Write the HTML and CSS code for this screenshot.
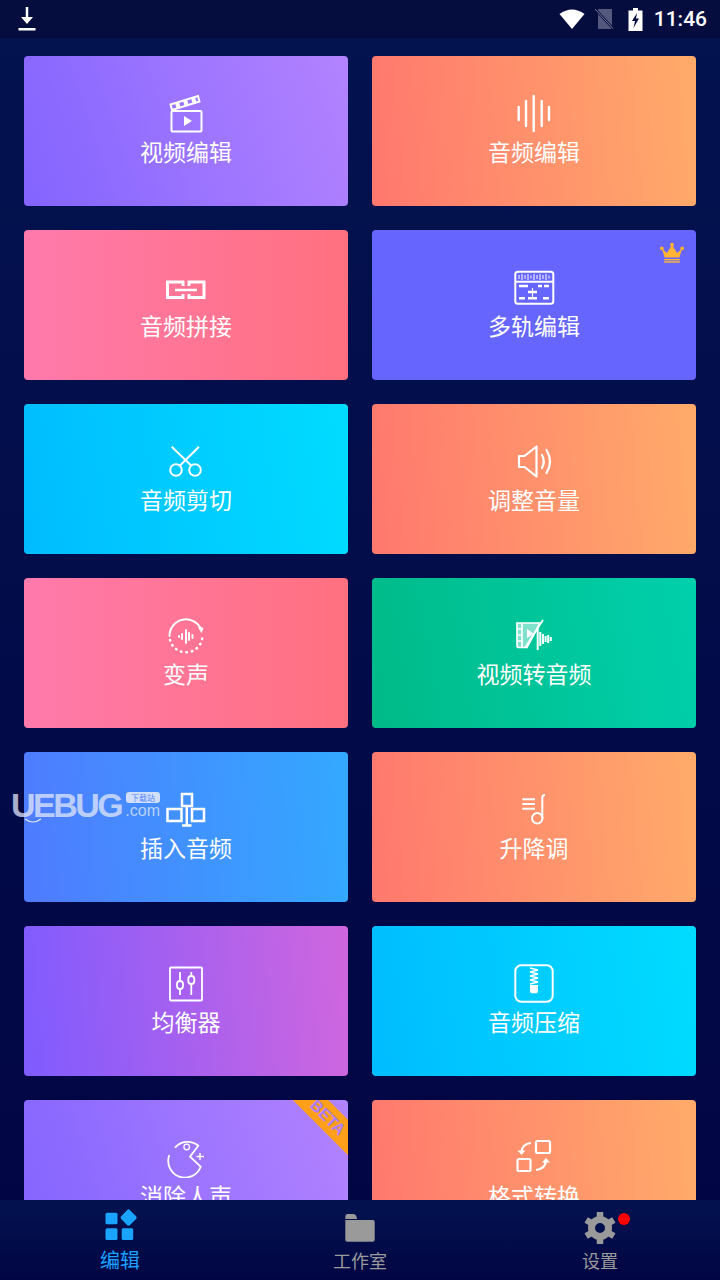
FILE: index.html
```html
<!DOCTYPE html>
<html lang="zh-CN">
<head>
  <meta charset="utf-8" />
  <title>音频编辑</title>
  <meta name="viewport" content="width=device-width, initial-scale=1">
  <link rel="stylesheet" href="styles.css">
</head>
<body>

<div class="phone">

  <!-- status bar -->
  <div class="status">
    <svg class="st-download" width="20" height="26" viewBox="0 0 20 26">
      <path d="M10 1 V12" stroke="#fff" stroke-width="2.500" fill="none"/>
      <path d="M4 11 H16 L10 18 Z" fill="#fff"/>
      <rect x="1.500" y="22" width="17" height="2.500" fill="#fff"/>
    </svg>
    <div class="status-right">
      <svg width="26" height="20" viewBox="0 0 26 20">
        <path d="M0.500 5 Q13 -4 25.500 5 L13 20 Z" fill="#fff"/>
      </svg>
      <svg class="st-sim" width="20" height="20" viewBox="0 0 20 20">
        <path d="M3 0 H17 V20 H3 Z" fill="#54587c"/>
        <path d="M0.500 0.500 L18.500 20" stroke="#050d3f" stroke-width="2.500"/>
        <path d="M0 0 L18 19.500" stroke="#7a7e9c" stroke-width="1"/>
      </svg>
      <svg width="15" height="23" viewBox="0 0 15 23">
        <path d="M5 0 H10 V2.500 H14.500 V23 H0.500 V2.500 H5 Z" fill="#fff"/>
        <path d="M9 5 L4 13 H7 L5.500 20 L11 10.500 H8 Z" fill="#050d3f"/>
      </svg>
      <span class="time">11:46</span>
    </div>
  </div>

  <!-- tool grid -->
  <div class="main">
    <div class="grid">

      <div class="card purple">
        <svg class="ico" viewBox="0 0 44 44" fill="none" stroke="#fff" stroke-width="2">
          <rect x="7.500" y="21" width="30" height="20.500" rx="1"/>
          <path d="M6.500 14.500 L34 6 L35.500 11.500 L8 20 Z"/>
          <path d="M11 13 L15 12 L16.500 17 L12.500 18 Z M19 10.500 L23 9.500 L24.500 14.500 L20.500 15.500 Z M27 8.500 L31 7.500 L32.500 12 L28.500 13 Z" fill="#fff" stroke="none"/>
          <path d="M20 26 L28 31 L20 36 Z" fill="#fff" stroke="none"/>
        </svg>
        <div class="label">视频编辑</div>
      </div>

      <div class="card orange">
        <svg class="ico" viewBox="0 0 44 44" fill="none" stroke="#fff" stroke-width="2.400" stroke-linecap="round">
          <path d="M6.700 17 V30 M14 11 V36 M21.700 6 V41 M29.700 11 V36 M37 17 V30"/>
        </svg>
        <div class="label">音频编辑</div>
      </div>

      <div class="card pink">
        <svg class="ico" viewBox="0 0 44 44" fill="none" stroke="#fff" stroke-width="3">
          <path d="M19 22 V18 H3.500 V33.500 H19 V30 M25 22 V18 H40 V33.500 H25 V30"/>
          <path d="M11 26 H33" stroke-width="2.500"/>
        </svg>
        <div class="label">音频拼接</div>
      </div>

      <div class="card violet">
        <svg class="crown" width="24" height="22" viewBox="0 0 26 22" fill="#ffb433">
          <circle cx="2" cy="6" r="2"/>
          <circle cx="13" cy="2" r="2"/>
          <circle cx="24" cy="6" r="2"/>
          <path d="M2 6 L7.500 11 L13 2 L18.500 11 L24 6 L21 16 H5 Z"/>
          <rect x="4.500" y="17.500" width="17" height="1.500"/>
          <rect x="4.500" y="20" width="17" height="1.500"/>
        </svg>
        <svg class="ico" viewBox="0 0 44 44" fill="none" stroke="#fff" stroke-width="2">
          <rect x="3.300" y="7.700" width="38" height="32" rx="2.500"/>
          <path d="M3.300 17.700 H41.300"/>
          <path d="M7 11 V15 M10 10 V16 M13 11 V15 M16 10 V16 M19 11.500 V14.500 M22 10 V16 M25 11 V15 M28 10 V16 M31 11 V15 M34 10 V16 M37 11.500 V14.500" stroke-width="1"/>
          <path d="M7 22 H16 M26 22 H30 M32 22 H37 M16 28 H25 M7 34.300 H13 M16 34.300 H25 M31 34.300 H37" stroke-width="2.500"/>
          <path d="M20.500 24 V33" stroke-width="1.200"/>
        </svg>
        <div class="label">多轨编辑</div>
      </div>

      <div class="card cyan">
        <svg class="ico" viewBox="0 0 44 44" fill="none" stroke="#fff" stroke-width="2">
          <circle cx="12" cy="32" r="5.800"/>
          <circle cx="31" cy="32" r="5.800"/>
          <path d="M7.700 8.700 L27.700 28 M35 8.700 L15.500 28"/>
        </svg>
        <div class="label">音频剪切</div>
      </div>

      <div class="card orange">
        <svg class="ico" viewBox="0 0 44 44" fill="none" stroke="#fff" stroke-width="2.200" stroke-linejoin="round" stroke-linecap="round">
          <path d="M7 18 H12.500 L24.500 8.500 V38.500 L12.500 29 H7 Z"/>
          <path d="M30 17 Q33.500 23.500 30 30 M34.500 12 Q41.500 23.500 34.500 35"/>
        </svg>
        <div class="label">调整音量</div>
      </div>

      <div class="card pink">
        <svg class="ico" viewBox="0 0 44 44" fill="none" stroke="#fff" stroke-width="2" stroke-linecap="round">
          <path d="M5.500 24 A16.500 16.500 0 0 1 37 17"/>
          <path d="M35 15.500 L39 16 L37.500 20 Z" fill="#fff" stroke-width="1"/>
          <path d="M6 28 A16.500 16.500 0 0 0 38.300 26" stroke-width="2.600" stroke-dasharray="0.500 5"/>
          <path d="M15 24 V25 M18 22 V27 M22 18 V31 M25 21 V28 M28.500 23 V26" stroke-width="2"/>
        </svg>
        <div class="label">变声</div>
      </div>

      <div class="card green">
        <svg class="ico" viewBox="0 0 44 44" fill="none" stroke="#fff" stroke-width="1.700">
          <path d="M5 11 H28 L15 35.500 H7 Q5 35.500 5 33.500 Z" fill="rgba(255,255,255,0.5)"/>
          <path d="M10 11 V35.500 M5 17 H10 M5 23 H10 M5 29 H10"/>
          <path d="M15 17 L22 22 L15 26 Z" fill="#fff" stroke="none"/>
          <path d="M31 8 L13 35.700"/>
          <path d="M25.700 16 V38 M28.300 20 V34 M31 22 V32 M33.600 24 V30 M36.200 23 V31 M38.800 25 V29" stroke-width="2"/>
        </svg>
        <div class="label">视频转音频</div>
      </div>

      <div class="card blue">
        <svg class="ico" viewBox="0 0 44 44" fill="none" stroke="#fff" stroke-width="2.500">
          <rect x="18" y="8" width="10" height="12"/>
          <rect x="3.500" y="23" width="14" height="12"/>
          <rect x="28" y="23" width="12" height="12"/>
          <path d="M22.800 20 V39 M18 39.500 H27.500"/>
        </svg>
        <div class="label">插入音频</div>
      </div>

      <div class="card orange">
        <svg class="ico" viewBox="0 0 44 44" fill="none" stroke="#fff" stroke-width="2">
          <path d="M10.300 13.300 H23 M10.300 18 H23 M10.300 22.700 H23"/>
          <path d="M33 9 Q30.300 9 30.300 11.500 V32.500"/>
          <circle cx="25.300" cy="32.300" r="5.200"/>
        </svg>
        <div class="label">升降调</div>
      </div>

      <div class="card magenta">
        <svg class="ico" viewBox="0 0 44 44" fill="none" stroke="#fff" stroke-width="1.800">
          <rect x="6" y="7.500" width="32" height="33" rx="1"/>
          <path d="M16 12 V21 M16 29 V35 M27.300 12 V16 M27.300 24 V35"/>
          <rect x="13" y="21" width="6" height="8" rx="3"/>
          <rect x="24.300" y="16" width="6" height="8" rx="3"/>
        </svg>
        <div class="label">均衡器</div>
      </div>

      <div class="card cyan">
        <svg class="ico" viewBox="0 0 44 44" fill="none" stroke="#fff" stroke-width="2">
          <rect x="3.300" y="5.300" width="37.400" height="36.400" rx="6"/>
          <path d="M18 8 L26 10 L18 12 L26 14 L18 16 L26 18 L18 20 L26 22 L18 24" stroke-width="1.500"/>
          <path d="M18 25 H26 V31 Q26 33.300 24 33.300 H20 Q18 33.300 18 31 Z" fill="#fff" stroke="none"/>
        </svg>
        <div class="label">音频压缩</div>
      </div>

      <div class="card purple">
        <div class="ribbon">BETA</div>
        <svg class="ico" viewBox="0 0 44 44" fill="none" stroke="#fff" stroke-width="1.800">
          <path d="M11 13.700 A16.500 16.500 0 0 1 34.300 11.700 L26 22.700 L36.700 32.700 A16.500 16.500 0 0 1 5.300 21"/>
          <circle cx="22.700" cy="13" r="2.800" stroke-width="1.300"/>
          <path d="M32.500 22.500 H40 M36 19 V26" stroke-width="1.400"/>
        </svg>
        <div class="label">消除人声</div>
      </div>

      <div class="card orange">
        <svg class="ico" viewBox="0 0 44 44" fill="none" stroke="#fff" stroke-width="2.200">
          <rect x="24" y="7" width="14" height="12" rx="1.500"/>
          <rect x="5.500" y="25" width="13" height="12" rx="1.500"/>
          <path d="M19 9 Q10 10 9.500 18"/>
          <path d="M5.500 16.500 H13.500 L9.500 21 Z" fill="#fff" stroke="none"/>
          <path d="M24 36 Q33 35 34 27"/>
          <path d="M30 28.500 H38 L34 24 Z" fill="#fff" stroke="none"/>
        </svg>
        <div class="label">格式转换</div>
      </div>

    </div>

    <!-- site watermark over the grid -->
    <div class="watermark">
      <span class="wm-name">UEBUG</span>
      <svg class="wm-smile" width="18" height="6" viewBox="0 0 18 6" fill="none" stroke="#e1e8fa" stroke-width="1.200">
        <path d="M1 1 Q9 7 17 1"/>
      </svg>
      <div class="wm-side">
        <span class="wm-tag">下载站</span>
        <span class="wm-com">.com</span>
      </div>
    </div>
  </div>

  <!-- bottom tabs -->
  <div class="tabs">
    <div class="tab active">
      <svg class="tab-ico" width="36" height="36" viewBox="0 0 36 36" fill="#1aa3ff">
        <rect x="3.500" y="4.700" width="12" height="11.600" rx="1.500"/>
        <rect x="3.500" y="20.300" width="12" height="11.700" rx="1.500"/>
        <rect x="19.700" y="20.300" width="11.500" height="11.700" rx="1.500"/>
        <path d="M26.500 1.300 Q27.500 1.300 28 2.300 L34.300 8.500 Q35 9.700 34.300 10.800 L28 17 Q26.500 18.300 25 17 L19 10.800 Q18.300 9.700 19 8.500 L25 2.300 Q25.500 1.300 26.500 1.300 Z"/>
      </svg>
      <span class="tab-text big">编辑</span>
    </div>
    <div class="tab">
      <svg class="tab-ico" width="36" height="36" viewBox="0 0 36 36" fill="#9a9a9a">
        <path d="M3.300 8.500 Q3.300 6 5.500 6 H11 Q14.500 6 15 11 H3.300 Z"/>
        <path d="M3.300 12 H31 Q32.700 12 32.700 14 V31.500 Q32.700 33.700 30.700 33.700 H5.300 Q3.300 33.700 3.300 31.700 Z"/>
      </svg>
      <span class="tab-text">工作室</span>
    </div>
    <div class="tab">
      <svg class="tab-ico" width="36" height="36" viewBox="0 0 36 36">
        <circle cx="18" cy="20" r="8.500" fill="none" stroke="#9a9a9a" stroke-width="7"/>
        <path d="M18 4 V36 M31.860 12 L4.140 28 M31.860 28 L4.140 12" stroke="#9a9a9a" stroke-width="6.500" stroke-dasharray="5 22 5"/>
      </svg>
      <span class="dot"></span>
      <span class="tab-text">设置</span>
    </div>
  </div>

</div>

</body>
</html>
```

FILE: styles.css
```css
* {
  box-sizing: border-box;
}

html, body {
  margin: 0;
  padding: 0;
  background: #020544;
}

.phone {
  width: 720px;
  height: 1280px;
  display: flex;
  flex-direction: column;
  overflow: hidden;
  font-family: "Noto Sans CJK SC", "Noto Sans", sans-serif;
  color: #fff;
}

/* status bar */
.status {
  height: 38px;
  flex: none;
  background: #050d3f;
  display: flex;
  align-items: center;
  justify-content: space-between;
  padding: 0 13px 0 17px;
}

.st-download {
  display: block;
}

.st-sim {
  margin-right: 3px;
}

.status-right {
  display: flex;
  align-items: center;
  gap: 10px;
}

.time {
  font-family: Roboto, sans-serif;
  font-size: 21px;
  font-weight: 500;
  line-height: 38px;
  margin-left: 1px;
}

/* grid */
.main {
  position: relative;
  flex: 1;
  min-height: 0;
  overflow: hidden;
  padding: 18px 24px 0;
  background: linear-gradient(180deg, #03134f 0%, #020544 100%);
}

.grid {
  display: grid;
  grid-template-columns: 324px 324px;
  grid-auto-rows: 150px;
  gap: 24px;
}

.card {
  position: relative;
  overflow: hidden;
  border-radius: 4px;
  padding-top: 34px;
  display: flex;
  flex-direction: column;
  align-items: center;
}

.ico {
  display: block;
  width: 44px;
  height: 44px;
  flex: none;
}

.label {
  margin-top: 2px;
  font-size: 23px;
  line-height: 30px;
  white-space: nowrap;
}

.purple  { background: linear-gradient(72deg, #8364ff, #b383ff); }
.orange  { background: linear-gradient(85deg, #ff786e, #ffab6a); }
.pink    { background: linear-gradient(90deg, #ff7aac, #ff707f); }
.violet  { background: #6666ff; }
.cyan    { background: linear-gradient(82deg, #00bcff, #00dcff); }
.green   { background: linear-gradient(80deg, #00ba88, #00d0ac); }
.blue    { background: linear-gradient(85deg, #4f7bff, #33a9ff); }
.magenta { background: linear-gradient(85deg, #7f5bff, #d066de); }

.crown {
  position: absolute;
  top: 12px;
  right: 12px;
}

.ribbon {
  position: absolute;
  top: 7px;
  right: -42px;
  width: 120px;
  height: 25px;
  padding-right: 6px;
  background: #ff9f1a;
  color: #ad7eff;
  font-family: "Liberation Sans", sans-serif;
  font-size: 16px;
  font-weight: 700;
  line-height: 25px;
  text-align: center;
  transform: rotate(45deg);
}

/* watermark */
.watermark {
  position: absolute;
  left: 11px;
  top: 747px;
  display: flex;
  align-items: flex-start;
  gap: 4px;
  color: rgba(225, 232, 250, 0.75);
  font-family: "Liberation Sans", sans-serif;
}

.wm-name {
  font-size: 34px;
  font-weight: 700;
  line-height: 40px;
  letter-spacing: -2.500px;
}

.wm-smile {
  position: absolute;
  left: 13px;
  top: 33px;
}

.wm-side {
  display: flex;
  flex-direction: column;
  align-items: flex-end;
  padding-top: 7px;
}

.wm-tag {
  background: rgba(225, 232, 250, 0.9);
  color: #4f86ff;
  font-family: "Noto Sans CJK SC", sans-serif;
  font-size: 8px;
  line-height: 11px;
  padding: 0 5px;
  border-radius: 3px;
}

.wm-com {
  font-size: 16px;
  line-height: 16px;
}

/* bottom tabs */
.tabs {
  height: 80px;
  flex: none;
  display: grid;
  grid-template-columns: 240px 240px 240px;
  background: linear-gradient(180deg, #03134f 0%, #020544 100%);
}

.tab {
  position: relative;
  display: flex;
  flex-direction: column;
  align-items: center;
  padding-top: 8px;
  color: #9a9a9a;
}

.tab.active {
  color: #1aa3ff;
}

.tab-ico {
  display: block;
  flex: none;
}

.tab-text {
  font-size: 18px;
  line-height: 26px;
  margin-top: 3px;
}

.tab-text.big {
  font-size: 20px;
}

.dot {
  position: absolute;
  top: 13px;
  left: 138px;
  width: 12px;
  height: 12px;
  border-radius: 50%;
  background: #f00;
}
```
